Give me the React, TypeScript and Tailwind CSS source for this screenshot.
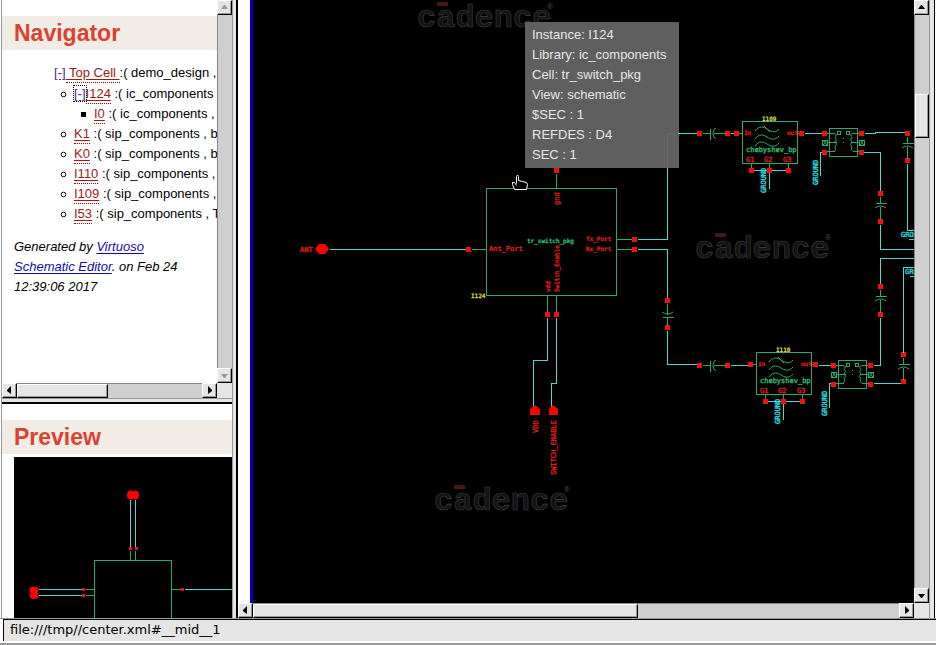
import React from 'react';

const CYAN = '#4fd6cf';
const LABEL_CYAN = '#2fe3e8';
const GREEN = '#2cab68';
const RED = '#f01010';
const YELLOW = '#dcdc3c';

type Direction = 'up' | 'down' | 'left' | 'right';

const arrows: Record<Direction, string> = {
  up: '1,6 4,2 5,2 8,6',
  down: '1,3 8,3 5,7 4,7',
  left: '6,0 6,8 2,5 2,4',
  right: '3,0 3,8 7,5 7,4',
};

function ScrollButton({ dir, disabled = false }: { dir: Direction; disabled?: boolean }) {
  return (
    <button
      type="button"
      aria-label={`Scroll ${dir}`}
      disabled={disabled}
      className="flex size-[15px] shrink-0 items-center justify-center border border-t-white border-l-white border-r-black border-b-black bg-[#e5e5e5] shadow-[inset_-1px_-1px_0_#999]"
    >
      <svg width="9" height="9" viewBox="0 0 9 9">
        <polygon points={arrows[dir]} fill={disabled ? '#999' : '#000'} />
      </svg>
    </button>
  );
}

const thumbClass =
  'border border-t-white border-l-white border-r-black border-b-black bg-[#e5e5e5] shadow-[inset_-1px_-1px_0_#999]';

/* ---------- schematic primitives ---------- */

function Wire({ d, color = CYAN }: { d: string; color?: string }) {
  return (
    <path d={d} transform="translate(0.5 0.5)" fill="none" stroke={color} strokeWidth="1" shapeRendering="crispEdges" />
  );
}

function Pin({ x, y, size = 5 }: { x: number; y: number; size?: number }) {
  const half = Math.floor(size / 2);
  return <rect x={x - half} y={y - half} width={size} height={size} fill={RED} />;
}

function Label({
  x,
  y,
  color = '#f01c1c',
  size = 6,
  vertical = false,
  children,
}: {
  x: number;
  y: number;
  color?: string;
  size?: number;
  vertical?: boolean;
  children: string;
}) {
  return (
    <text
      x={x}
      y={y}
      fill={color}
      stroke={color}
      strokeWidth="0.3"
      fontSize={size}
      className="font-['DejaVu_Sans_Mono','Liberation_Mono',monospace]"
      transform={vertical ? `rotate(-90 ${x} ${y})` : undefined}
    >
      {children}
    </text>
  );
}

/* Vertical capacitor centred on (x, y), where y is the flat plate. */
function CapV({ x, y, top, bottom, arcAbove = false }: { x: number; y: number; top: number; bottom: number; arcAbove?: boolean }) {
  const tip = arcAbove ? y - 3 : y + 3;
  const end = arcAbove ? y - 5 : y + 5;
  return (
    <g>
      <Pin x={x} y={top} />
      <Pin x={x} y={bottom} />
      <Wire color={GREEN} d={`M${x} ${top + 3}V${arcAbove ? tip : y}M${x} ${arcAbove ? y : tip}V${bottom - 2}M${x - 5} ${y}H${x + 6}`} />
      <path
        d={`M${x - 5} ${end}Q${x + 0.5} ${arcAbove ? tip + 2 : tip - 2} ${x + 6} ${end}`}
        fill="none"
        stroke={GREEN}
      />
    </g>
  );
}

function CapH({ y }: { y: number }) {
  return (
    <g>
      <Pin x={699} y={y} />
      <Pin x={727} y={y} />
      <Wire color={GREEN} d={`M702 ${y}H710M713 ${y}H725M710 ${y - 5}V${y + 6}`} />
      <path d={`M715.5 ${y - 5}Q710.5 ${y + 0.5} 715.5 ${y + 6}`} fill="none" stroke={GREEN} />
    </g>
  );
}

function Filter({ x, y, name, input }: { x: number; y: number; name: string; input: string }) {
  return (
    <g transform={`translate(${x} ${y})`}>
      <Wire color={GREEN} d="M0 0H55V42H0ZM-4 12H0M55 12H57M9 42V47M27 42V47M46 42V47" />
      <Wire d="M9 49H46M27 51V67" />
      <g fill="none" stroke={GREEN}>
        <path d="M13 10C17 4 22 6 25 8S33 13 37 8M22 5L28 11" />
        <path d="M13 18C17 12 22 14 25 16S33 20 37 15" />
        <path d="M13 25C17 19 22 21 25 23S33 27 37 22" />
      </g>
      <Pin x={-6} y={12} />
      <Pin x={59} y={12} />
      <Pin x={9} y={49} />
      <Pin x={27} y={49} />
      <Pin x={46} y={49} />
      <Label x={2} y={14}>{input}</Label>
      <Label x={45} y={14}>out</Label>
      <Label x={4} y={31} size={7} color="#2fc878">chebyshev_bp</Label>
      <Label x={4} y={41} size={7}>G1</Label>
      <Label x={22} y={41} size={7}>G2</Label>
      <Label x={41} y={41} size={7}>G3</Label>
      <Label x={20} y={0} size={6} color={YELLOW}>{name}</Label>
      <Label x={24} y={72} size={7} color={LABEL_CYAN} vertical>GROUND</Label>
    </g>
  );
}

function Balun({ x, y }: { x: number; y: number }) {
  return (
    <g transform={`translate(${x} ${y})`}>
      <Wire color={GREEN} d="M0 0H28V28H0ZM-3 5H5M-3 23H5M23 5H31M23 23H31M-2 14H7M21 14H30M-7 12H-2V17H-7ZM30 12H35V17H30ZM8 3H11V6H8ZM17 3H20V6H17Z" />
      <g fill="none" stroke={GREEN}>
        <path d="M5 5.500Q9 6.500 6 9.500Q9 11 6 14Q9 16 6 19Q8 22 5 23.500" />
        <path d="M24 5.500Q20 6.500 23 9.500Q20 11 23 14Q20 16 23 19Q21 22 24 23.500" />
        <path d="M-6 12L-2 17M-2 12L-6 17M31 12L35 17M35 12L31 17" />
      </g>
      <rect x="14" y="10" width="1" height="1" fill={GREEN} />
      <rect x="14" y="14" width="1" height="1" fill={GREEN} />
      <Pin x={-5} y={5} />
      <Pin x={-5} y={24} />
      <Pin x={32} y={5} />
      <Pin x={32} y={24} />
    </g>
  );
}

function Watermark({ x, y }: { x: number; y: number }) {
  return (
    <g transform={`translate(${x} ${y})`}>
      <text
        x="-2"
        y="-1"
        fontSize="32"
        fontWeight="bold"
        fill="#131313"
        stroke="#404040"
        strokeWidth="0.6"
        className="font-['Liberation_Mono',monospace]"
      >
        cadence
      </text>
      <rect x="18" y="-26" width="11" height="4" fill="#4a1616" />
      <text x="128" y="-19" fontSize="8" fill="#505050" className="font-['Liberation_Sans',sans-serif]">
        ®
      </text>
    </g>
  );
}

function Schematic() {
  return (
    <svg width="661" height="602" viewBox="253 0 661 602" className="block shrink-0" aria-label="Schematic">
      <Watermark x={419} y={28} />
      <Watermark x={697} y={259} />
      <Watermark x={436} y={511} />

      {/* antenna port */}
      <Label x={300} y={252} size={7}>ANT</Label>
      <polygon points="315,249 319,244 325,244 329,249 325,254 319,254" fill="#ff0000" />
      <Wire d="M329 249H466" />
      <Pin x={468} y={249} />
      <Wire color={GREEN} d="M471 249H486" />

      {/* switch package */}
      <Wire color={GREEN} d="M486 188H616V295H486ZM556 173V188M616 239H632M616 249H632M547 295V312M556 295V312" />
      <Pin x={556} y={170} />
      <Pin x={634} y={239} />
      <Pin x={634} y={249} />
      <Pin x={547} y={314} />
      <Pin x={556} y={314} />
      <Label x={559} y={205} size={7} vertical>gnd</Label>
      <Label x={527} y={243} color="#2fc878">tr_switch_pkg</Label>
      <Label x={489} y={251} size={7}>Ant_Port</Label>
      <Label x={586} y={241}>Tx_Port</Label>
      <Label x={586} y={251}>Rx_Port</Label>
      <Label x={550} y={292} vertical>vdd</Label>
      <Label x={559} y={292} vertical>Switch_Enable</Label>
      <Label x={471} y={298} color={YELLOW}>I124</Label>

      <Wire d="M547 317V360H533V408M556 317V383H551V408" />
      <polygon points="530,415 530,409 535,405 540,409 540,415" fill="#ff0000" />
      <polygon points="549,415 549,409 553,405 558,409 558,415" fill="#ff0000" />
      <Label x={538} y={433} size={7} vertical>VDD</Label>
      <Label x={556} y={475} size={7} vertical>SWITCH_ENABLE</Label>

      {/* transmit branch */}
      <Wire d="M637 239H667V133H697M730 133H735M804 133H822M864 133H875V132H905M863 152H880V191M822 152H820V175" />
      <CapH y={133} />
      <Filter x={742} y={121} name="I109" input="In" />
      <Balun x={829} y={128} />
      <Label x={818} y={185} size={7} color={LABEL_CYAN} vertical>GROUND</Label>
      <CapV x={907} y={143} top={133} bottom={160} />
      <Wire d="M907 163V230H914M908 239H914" />
      <Label x={901} y={237} size={7} color={LABEL_CYAN}>GROUND</Label>
      <CapV x={880} y={203} top={193} bottom={221} />
      <Wire d="M880 224V249H914M880 284V258H914" />

      {/* receive branch */}
      <Wire d="M637 249H667V298M667 330V364H697M730 365H748M818 365H832M873 365H880V317M873 383H903M832 383H829V407" />
      <CapV x={667} y={317} top={300} bottom={327} arcAbove />
      <CapH y={365} />
      <Filter x={756} y={352} name="I110" input="in" />
      <Balun x={838} y={360} />
      <Label x={827} y={416} size={7} color={LABEL_CYAN} vertical>GROUND</Label>
      <CapV x={880} y={296} top={286} bottom={314} />
      <CapV x={903} y={364} top={354} bottom={381} />
      <Wire d="M903 352V267H914M909 276H914" />
      <Label x={905} y={274} size={7} color={LABEL_CYAN}>GROUND</Label>

      {/* pointer */}
      <path
        d="M516.500 183.500V176.500Q517.500 173.500 518.500 176.500V180.500L522.500 181.500L526.500 182.500L527.500 184.500L526.500 189.500H514.500L512.500 184.500V182.500L514.500 182.500L516.500 185.500"
        fill="#000"
        stroke="#fff"
      />
    </svg>
  );
}

function PreviewDrawing() {
  return (
    <svg width="218" height="161" viewBox="14 457 218 161" className="block shrink-0" aria-label="Schematic preview">
      <Wire d="M130 499V546M135 499V546M38 589H82M38 595H82M184 589H232" />
      <Wire color={GREEN} d="M94 620V560H171V620M130 550V560M135 550V560M85 589H94M85 595H94M171 589H181" />
      <ellipse cx="130.5" cy="495" rx="3.500" ry="4.500" fill="#ff0000" />
      <ellipse cx="135.5" cy="495" rx="3.500" ry="4.500" fill="#ff0000" />
      <ellipse cx="34" cy="590" rx="4.500" ry="3.500" fill="#ff0000" />
      <ellipse cx="34" cy="595.5" rx="4.500" ry="3.500" fill="#ff0000" />
      <Pin x={130} y={548} size={3} />
      <Pin x={136} y={548} size={3} />
      <Pin x={83} y={589} size={3} />
      <Pin x={83} y={595} size={3} />
      <Pin x={182} y={589} size={3} />
    </svg>
  );
}

/* ---------- navigator ---------- */

const cellLink = 'border-b border-dotted border-[#8b1010] pb-0.5 text-[#a01818] underline underline-offset-2';
const toggleLink = 'text-[#551a8b] underline underline-offset-2';

const siblings = [
  { name: 'K1', rest: ':( sip_components , b' },
  { name: 'K0', rest: ':( sip_components , b' },
  { name: 'I110', rest: ':( sip_components ,' },
  { name: 'I109', rest: ':( sip_components ,' },
  { name: 'I53', rest: ':( sip_components , T' },
];

function Bullet() {
  return (
    <svg width="7" height="7" viewBox="0 0 7 7" className="mr-[7px] shrink-0" aria-hidden="true">
      <circle cx="3.500" cy="3.500" r="2.300" fill="none" stroke="#000" />
    </svg>
  );
}

function Heading({ children }: { children: string }) {
  return <h1 className="mt-4 bg-[#f1ece6] pl-3 text-[23px] leading-[34px] font-bold text-[#d9432f]">{children}</h1>;
}

function Navigator() {
  return (
    <section className="flex h-[398px] shrink-0 flex-col">
      <div className="flex min-h-0 flex-1">
        <div className="min-w-0 flex-1 overflow-hidden bg-white">
          <Heading>Navigator</Heading>
          <div className="mt-[13px] text-[13px] leading-5 whitespace-nowrap">
            <p className="mb-px pl-[52px]">
              <a href="#top-toggle" className={toggleLink}>[-]</a>
              <a href="#top" className={`${cellLink} whitespace-pre`}> Top Cell </a>
              :( demo_design ,
            </p>
            <ul>
              <li className="flex items-center pl-[58px]">
                <Bullet />
                <span>
                  <a href="#i124-toggle" className={`${toggleLink} outline-1 outline-black outline-dotted`}>[-]</a>
                  <a href="#i124" className={cellLink}>I124</a> :( ic_components
                </span>
              </li>
              <li className="flex items-center pl-[79px]">
                <span className="mr-2 size-[5px] shrink-0 bg-black" />
                <span>
                  <a href="#i0" className={cellLink}>I0</a> :( ic_components ,
                </span>
              </li>
              {siblings.map((item) => (
                <li key={item.name} className="flex items-center pl-[58px]">
                  <Bullet />
                  <span>
                    <a href={`#${item.name}`} className={cellLink}>{item.name}</a> {item.rest}
                  </span>
                </li>
              ))}
            </ul>
          </div>
          <p className="mt-[13px] pr-8 pl-3 text-[13px] leading-5 italic">
            Generated by{' '}
            <a href="#virtuoso" className="text-[#0b0bb0] underline underline-offset-2">Virtuoso Schematic Editor</a>. on Feb 24 12:39:06 2017
          </p>
        </div>
        <div className="flex w-[15px] flex-col bg-[#cfcfcf]">
          <ScrollButton dir="up" disabled />
          <div className="flex-1 border-l border-[#888]" />
          <ScrollButton dir="down" disabled />
        </div>
      </div>
      <div className="flex h-[15px] bg-[#e5e5e5]">
        <ScrollButton dir="left" />
        <div className="flex-1 border-t border-[#888] bg-[#cfcfcf]">
          <div className={`h-full w-[49%] ${thumbClass}`} />
        </div>
        <ScrollButton dir="right" />
        <div className="w-[15px]" />
      </div>
    </section>
  );
}

function Tooltip() {
  return (
    <div
      role="tooltip"
      className="absolute top-[22px] left-[272px] bg-[#646464]/95 py-[3px] pr-[13px] pl-[7px] text-[13px] leading-5 whitespace-nowrap text-[#e6e6e6]"
    >
      <p>Instance: I124</p>
      <p>Library: ic_components</p>
      <p>Cell: tr_switch_pkg</p>
      <p>View: schematic</p>
      <p>$SEC : 1</p>
      <p>REFDES : D4</p>
      <p>SEC : 1</p>
    </div>
  );
}

export default function App() {
  return (
    <div className="flex h-screen flex-col overflow-hidden bg-[#e5e5e5] font-['Liberation_Sans',Arial,sans-serif] text-black">
      <main className="flex min-h-0 flex-1 border-l border-white">
        <aside className="flex w-[232px] shrink-0 flex-col border-x border-[#999]">
          <Navigator />
          <div className="h-1 shrink-0 border-t border-[#999]" />
          <section className="flex min-h-0 flex-1 flex-col overflow-hidden border-t-2 border-black bg-white">
            <Heading>Preview</Heading>
            <div className="mt-[3px] ml-3 min-h-0 flex-1 overflow-hidden bg-black">
              <PreviewDrawing />
            </div>
          </section>
        </aside>

        <div className="ml-[3px] flex min-w-0 flex-1 flex-col border-l-2 border-black">
          <div className="flex min-h-0 flex-1">
            <div className="flex min-w-0 flex-1 bg-white pl-3">
              <div className="relative min-w-0 flex-1 overflow-hidden border-l-3 border-[#0000c8] bg-black">
                <Schematic />
                <Tooltip />
              </div>
            </div>
            <div className="flex w-[15px] flex-col bg-[#cfcfcf]">
              <ScrollButton dir="up" />
              <div className="flex-1 border-l border-[#888] pt-[79px]">
                <div className={`h-11 ${thumbClass}`} />
              </div>
              <ScrollButton dir="down" />
            </div>
          </div>
          <div className="flex h-[15px] shrink-0 bg-[#e5e5e5]">
            <ScrollButton dir="left" />
            <div className="flex-1 border-t border-[#888] bg-[#cfcfcf]">
              <div className={`h-full w-[59.6%] ${thumbClass}`} />
            </div>
            <ScrollButton dir="right" />
            <div className="w-[15px]" />
          </div>
        </div>
        <div className="w-[7px] shrink-0 border-r border-white bg-[#e5e5e5]">
          <div className="h-full border-r border-l border-r-black border-l-[#999]" />
        </div>
      </main>
      <footer className="h-[27px] shrink-0 border-t border-b-2 border-t-[#999] border-b-[#999] bg-white pb-0.5 pl-[3px]">
        <p className="h-full border-t border-l border-black pl-1.5 font-['DejaVu_Sans',sans-serif] text-[13px] leading-5 bg-[#e5e5e5]">
          file:///tmp//center.xml#__mid__1
        </p>
      </footer>
    </div>
  );
}
